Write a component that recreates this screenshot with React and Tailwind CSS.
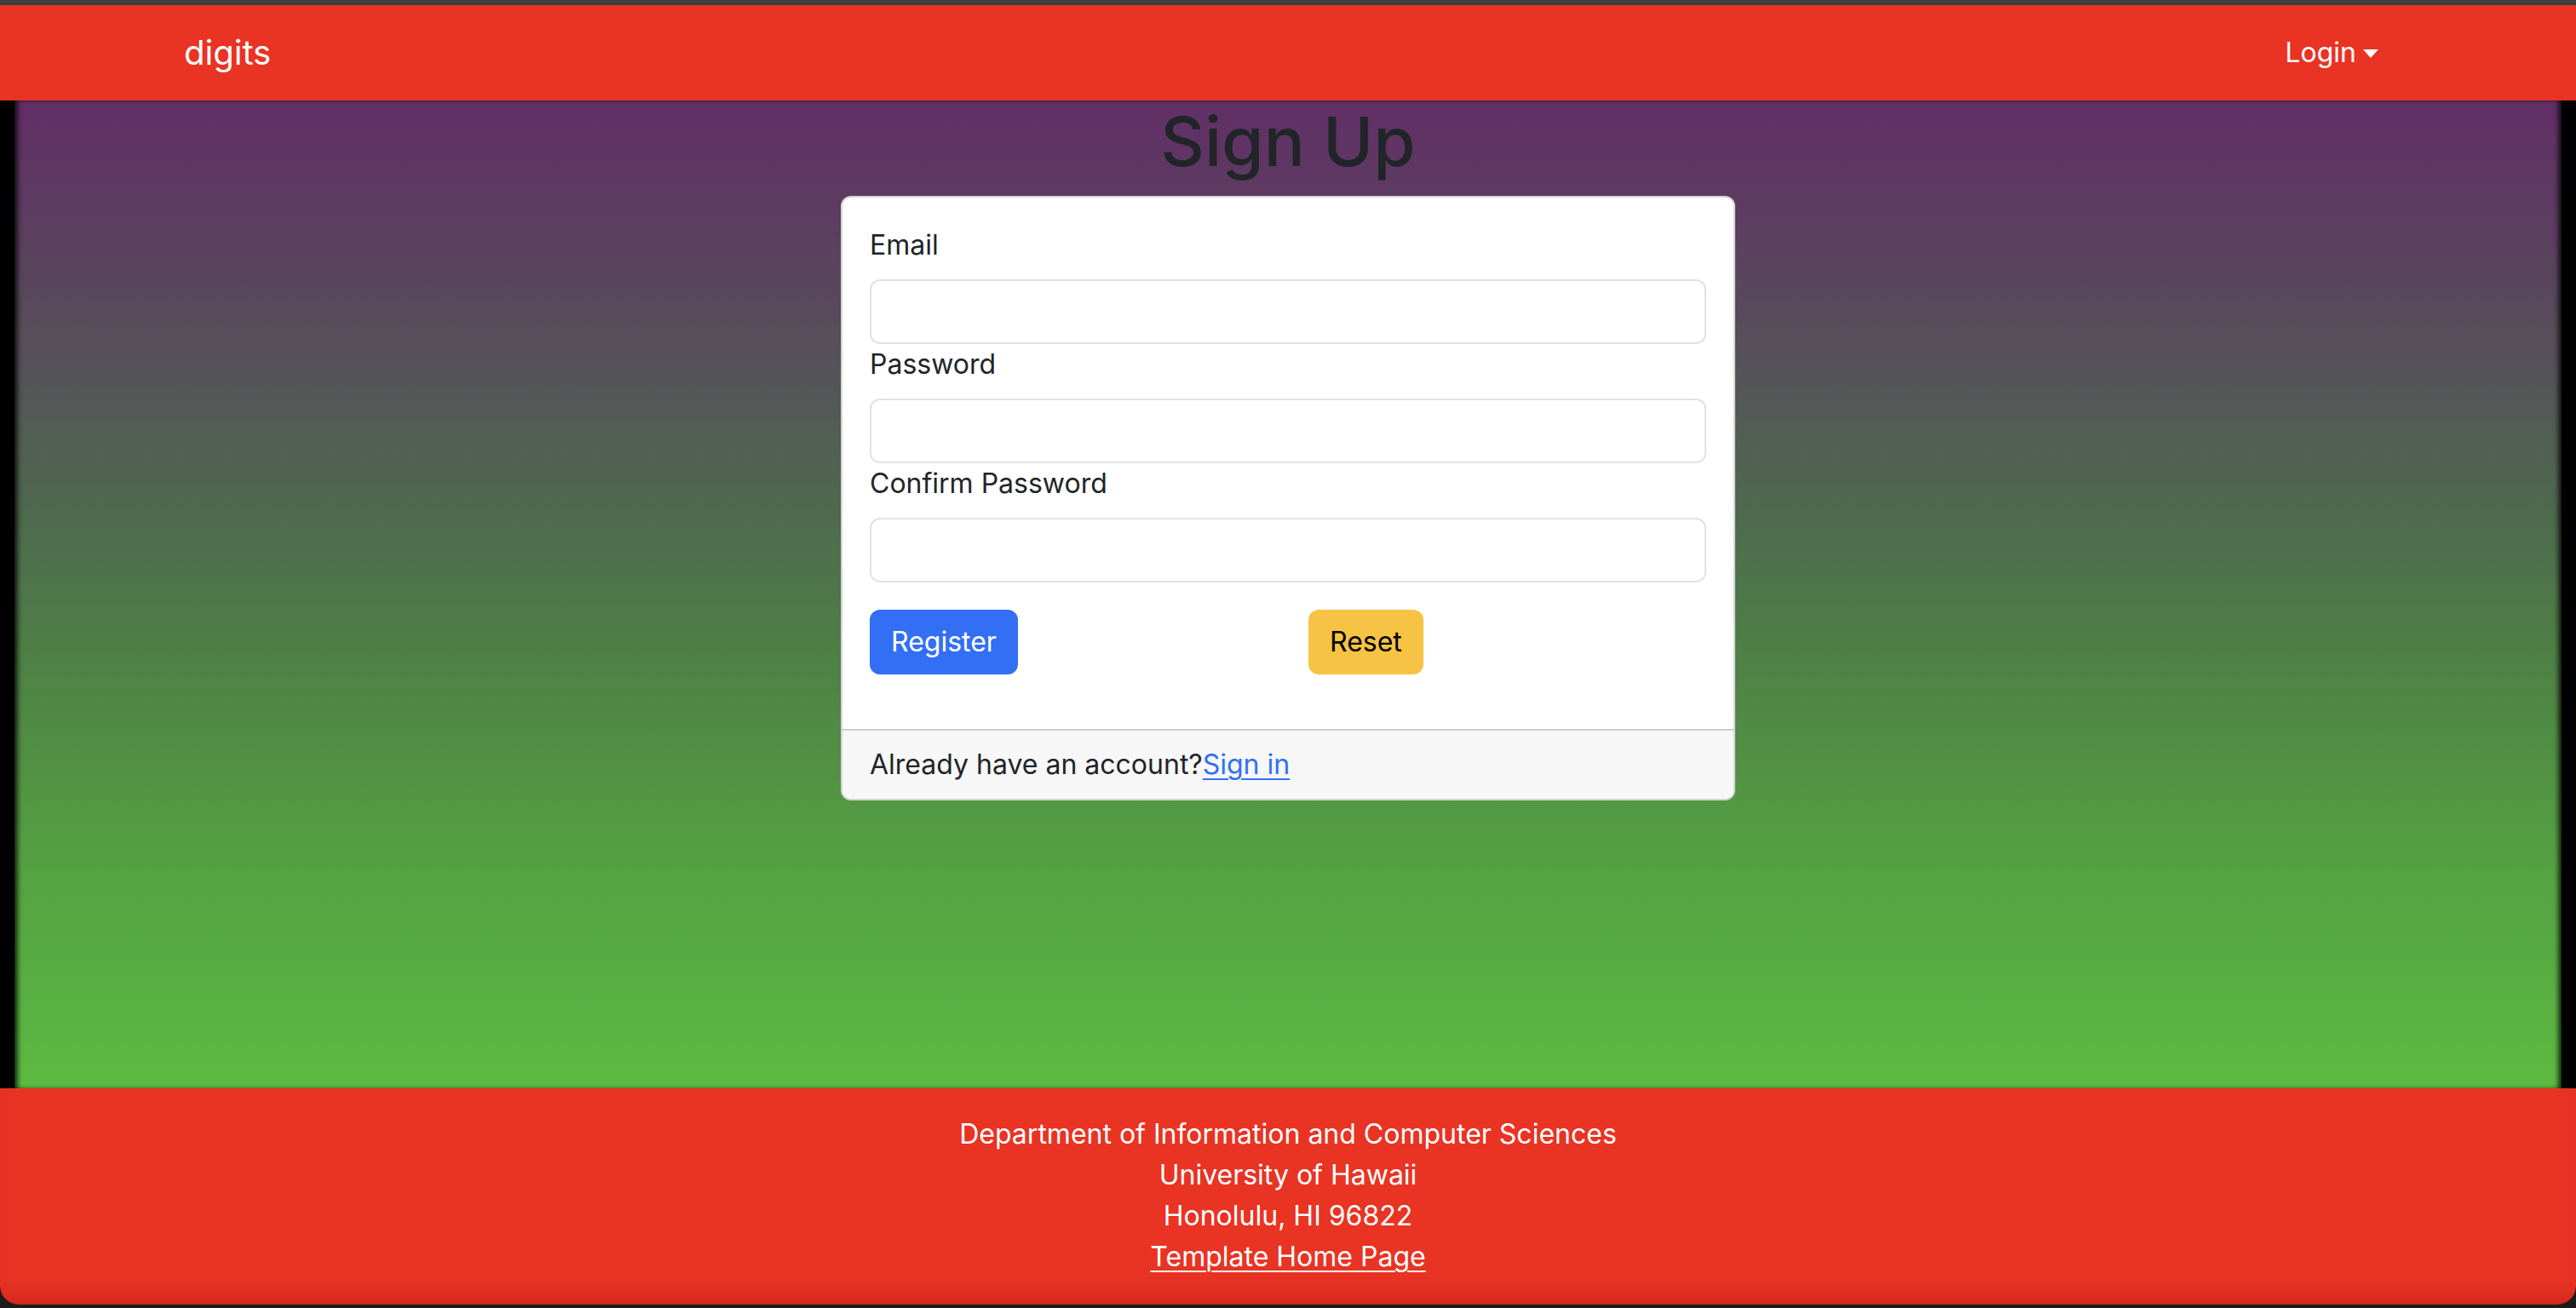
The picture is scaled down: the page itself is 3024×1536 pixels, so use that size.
import React from 'react';

const fieldLabels = ['Email', 'Password', 'Confirm Password'];

export default function App() {
  return (
    <div className="w-[3024px] h-[1536px] overflow-hidden bg-[#1c1c1c] font-['Inter','Noto_Sans',sans-serif] text-[#212529]">
      {/* window top edge */}
      <div className="h-[6px] bg-[#3e3e3e]" />

      <div className="flex flex-col h-[1526px] overflow-hidden rounded-b-[22px] bg-black">
        {/* Navbar */}
        <nav className="h-[112px] shrink-0 bg-[#e93323] text-white">
          <div className="mx-auto w-[2640px] h-full px-6 flex items-center justify-between">
            <a className="text-[40px] leading-[60px] py-[10px]">digits</a>
            <button className="flex items-center px-4 py-4 text-[32px] leading-[48px]">
              Login
              <span className="ml-[8px] mt-[2px] w-0 h-0 border-t-[10px] border-t-white border-x-[9px] border-x-transparent" />
            </button>
          </div>
        </nav>

        {/* Main */}
        <main className="h-[1160px] shrink-0 bg-black px-[17px]">
          <div className="h-full bg-[linear-gradient(to_bottom,#622f67_0%,#5c3d60_12%,#555458_28%,#4e6a4e_42%,#4f8644_60%,#55a242_78%,#5cba42_100%)] shadow-[inset_6px_0_6px_-3px_rgba(0,0,0,0.9),inset_-6px_0_6px_-3px_rgba(0,0,0,0.9)]">
            <h1 className="text-center text-[80px] leading-[96px] font-medium text-[#212529]">Sign Up</h1>

            <div className="mx-auto mt-4 w-[1050px] bg-white border-2 border-[#d3d3d3] rounded-[12px] overflow-hidden">
              <form className="px-8 pt-8 pb-8">
                {fieldLabels.map((label) => (
                  <div key={label}>
                    <label className="block mb-4 text-[32px] leading-[48px]">{label}</label>
                    <input
                      type={label === 'Email' ? 'email' : 'password'}
                      className="block w-full h-[76px] border-2 border-[#dee2e6] rounded-[12px] bg-white px-6 text-[32px] outline-none"
                    />
                  </div>
                ))}
                <div className="grid grid-cols-2 gap-x-12 mt-8 mb-8">
                  <div>
                    <button type="button" className="h-[76px] px-[25px] rounded-[12px] bg-[#336ff5] text-white text-[32px] leading-[48px]">
                      Register
                    </button>
                  </div>
                  <div>
                    <button type="button" className="h-[76px] px-[25px] rounded-[12px] bg-[#f6c344] text-black text-[32px] leading-[48px]">
                      Reset
                    </button>
                  </div>
                </div>
              </form>
              <div className="border-t-2 border-[#cdcdcd] bg-[#f7f7f7] px-8 py-4 text-[32px] leading-[48px]">
                Already have an account?<a className="text-[#336ff5] underline underline-offset-[5px] decoration-2">Sign in</a>
              </div>
            </div>
          </div>
        </main>

        {/* Footer */}
        <footer className="flex-1 bg-[#e93323] pt-[30px] text-center text-white text-[32px] leading-[48px] shadow-[inset_0_-24px_28px_-20px_rgba(120,0,0,0.35)]">
          <div>Department of Information and Computer Sciences</div>
          <div>University of Hawaii</div>
          <div>Honolulu, HI 96822</div>
          <div>
            <a className="underline underline-offset-[5px] decoration-2">Template Home Page</a>
          </div>
        </footer>
      </div>
    </div>
  );
}
